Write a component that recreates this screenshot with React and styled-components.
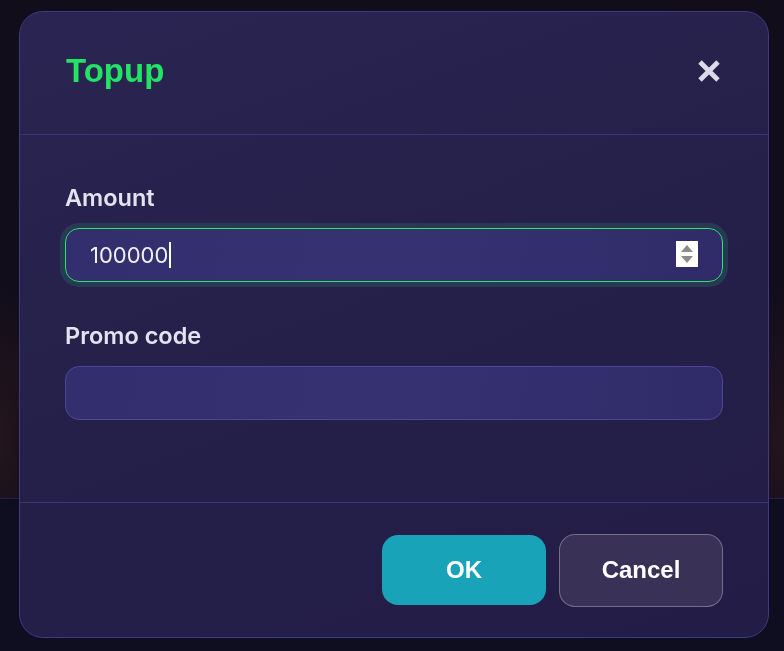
import React from 'react';
import styled, { createGlobalStyle } from 'styled-components';

const GlobalStyle = createGlobalStyle`
  * { box-sizing: border-box; }
  html, body { margin: 0; padding: 0; }
  body {
    background: #100d1b;
    font-family: Inter, "Liberation Sans", sans-serif;
    overflow: hidden;
  }
`;

const Page = styled.div`
  width: 784px;
  height: 651px;
  display: flex;
  flex-direction: column;
`;

const Backdrop = styled.div`
  height: 498px;
  background:
    radial-gradient(ellipse 60px 160px at 0% 88%, rgba(120, 60, 30, 0.18), transparent),
    radial-gradient(ellipse 60px 160px at 100% 88%, rgba(120, 60, 30, 0.18), transparent),
    #110d1b;
`;

const BottomBar = styled.div`
  flex: 1;
  background: #0f0e21;
  border-top: 1px solid #25224a;
`;

const Overlay = styled.div`
  position: fixed;
  inset: 0;
  padding: 11px 0 0 19px;
`;

const Dialog = styled.div`
  width: 750px;
  height: 627px;
  border: 1px solid #3f3a82;
  border-radius: 24px;
  background: linear-gradient(160deg, #2a2452 0%, #252049 50%, #221c46 100%);
  display: flex;
  flex-direction: column;
  overflow: hidden;
`;

const Header = styled.div`
  height: 123px;
  padding: 0 46px 4px 46px;
  display: flex;
  align-items: center;
  justify-content: space-between;
  border-bottom: 1px solid #3b3677;
`;

const Title = styled.h2`
  margin: 0;
  font-family: "Liberation Sans", Arial, sans-serif;
  font-weight: 700;
  font-size: 33px;
  color: #22e363;
`;

const CloseButton = styled.button`
  background: transparent;
  border: none;
  padding: 0;
  width: 24px;
  height: 24px;
  margin-right: 1px;
  display: grid;
  place-items: center;
  cursor: pointer;
`;

const Body = styled.div`
  height: 368px;
  padding: 50px 45px 0 45px;
  border-bottom: 1px solid #3b3677;
  display: flex;
  flex-direction: column;
`;

const Label = styled.label`
  display: block;
  font-size: 23.5px;
  font-weight: 600;
  color: #e4e2ee;
  margin-bottom: 17px;
  line-height: 26px;
`;

const Field = styled.div`
  margin-bottom: ${(p) => p.$gap}px;
`;

const InputBox = styled.div`
  position: relative;
  height: 54px;
  border-radius: 14px;
  padding: 0 24px;
  display: flex;
  align-items: center;
  background: linear-gradient(100deg, #332f6f 0%, #363272 50%, #302b68 100%);
  border: 1px solid ${(p) => (p.$focused ? '#2fe36d' : '#4c4797')};
  box-shadow: ${(p) => (p.$focused ? '0 0 0 5px rgba(40, 80, 90, 0.55)' : 'none')};
  font-size: 22px;
  color: #f2f1f8;
`;

const Caret = styled.span`
  display: inline-block;
  width: 2px;
  height: 26px;
  background: #ffffff;
  margin-left: 1px;
`;

const Spinner = styled.span`
  position: absolute;
  right: 24px;
  top: 12px;
  width: 22px;
  height: 26px;
  background: #ffffff;
  display: grid;
  place-items: center;
`;

const Footer = styled.div`
  flex: 1;
  display: flex;
  align-items: center;
  justify-content: flex-end;
  gap: 13px;
  padding: 0 45px 0 0;
`;

const Button = styled.button`
  height: ${(p) => (p.$primary ? 70 : 73)}px;
  width: 164px;
  border-radius: 16px;
  border: ${(p) => (p.$primary ? 'none' : '1px solid rgba(255, 255, 255, 0.3)')};
  background: ${(p) => (p.$primary ? '#18a3b8' : '#3a3157')};
  color: #ffffff;
  font-family: "Liberation Sans", Arial, sans-serif;
  font-weight: 700;
  font-size: 24px;
  cursor: pointer;
`;

const App = () => {
  return (
    <>
      <GlobalStyle />
      <Page>
        <Backdrop />
        <BottomBar />
      </Page>
      <Overlay>
        <Dialog>
          <Header>
            <Title>Topup</Title>
            <CloseButton aria-label='close'>
              <svg width='24' height='24' viewBox='0 0 24 24'>
                <path d='M3 3 L21 21 M21 3 L3 21' stroke='#dcdae6' strokeWidth='4.8' />
              </svg>
            </CloseButton>
          </Header>
          <Body>
            <Field $gap={41}>
              <Label>Amount</Label>
              <InputBox $focused>
                100000
                <Caret />
                <Spinner>
                  <svg width='14' height='22' viewBox='0 0 14 22'>
                    <path d='M7 2 L13 9 L1 9 Z' fill='#8b8b8b' />
                    <path d='M1 13 L13 13 L7 20 Z' fill='#8b8b8b' />
                  </svg>
                </Spinner>
              </InputBox>
            </Field>
            <Field $gap={0}>
              <Label>Promo code</Label>
              <InputBox />
            </Field>
          </Body>
          <Footer>
            <Button $primary>OK</Button>
            <Button>Cancel</Button>
          </Footer>
        </Dialog>
      </Overlay>
    </>
  );
};

export default App;
